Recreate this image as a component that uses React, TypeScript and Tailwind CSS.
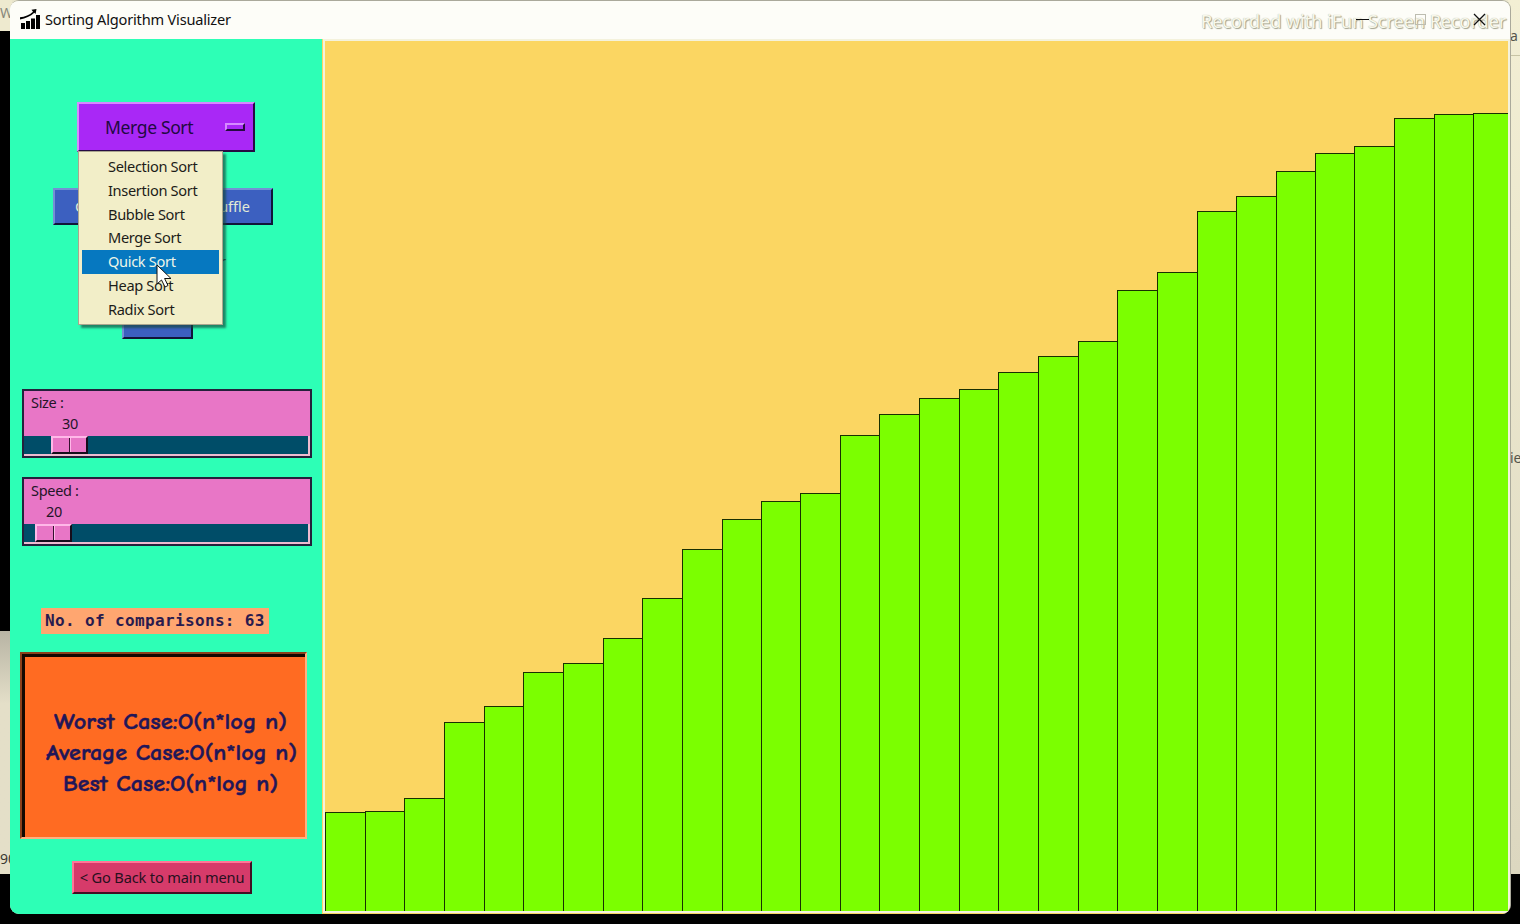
import React from "react";

const bars: [number, number][] = [
  [325, 812], [365, 811], [404, 798], [444, 722], [484, 706], [523, 672], [563, 663], [603, 638], [642, 598], [682, 549],
  [722, 519], [761, 501], [800, 493], [840, 435], [879, 414], [919, 398], [959, 389], [998, 372], [1038, 356], [1078, 341],
  [1117, 290], [1157, 272], [1197, 211], [1236, 196], [1276, 171], [1315, 153], [1354, 146], [1394, 118], [1434, 114], [1473, 113],
];
const END = 1507;
const FLOOR = 911;

const algorithms = ["Selection Sort", "Insertion Sort", "Bubble Sort", "Merge Sort", "Quick Sort", "Heap Sort", "Radix Sort"];

function Title() {
  return (
    <header className="relative flex h-[38px] shrink-0 items-start bg-[#fdfdf8] pl-[10px]">
      <svg className="mt-[8px] h-5 w-5" viewBox="0 0 20 20" fill="black">
        <path d="M0 8.2C5 7.8 9.5 6 13 2.7L11.5 .7L16.5 0L15.6 5L14.3 3.7C10.5 7.3 5.5 9.5 0 10.4Z" />
        <path d="M1 14h4v6H1zM6 12h4v8H6zM11 9.500h4v10.500H11zM16 6h4v14h-4z" />
      </svg>
      <h1 className="ml-[5px] mt-[7px] w-[188px] whitespace-nowrap text-[14.6px] leading-[22px] tracking-[-0.2px] text-[#111]">Sorting Algorithm Visualizer</h1>
      <span className="absolute left-[1191px] top-[8px] whitespace-nowrap text-[18px] leading-6 text-[#f8f8ea] [text-shadow:1px_1px_1px_#a0a08c,0_0_1px_#aaaa98]">Recorded with iFun Screen Recorder</span>
      <svg className="absolute left-[1346px] top-[12px] h-[14px] w-[132px]" viewBox="0 0 132 14" fill="none">
        <path d="M0 6.500h13" stroke="#111" />
        <rect x="59.500" y="1.500" width="10" height="10" stroke="#bdbdb0" />
        <path d="M118 1l11 11M129 1l-11 11" stroke="#111" strokeWidth="1.300" />
      </svg>
    </header>
  );
}

function Slider({ label, value, valuePad, pad }: { label: string; value: number; valuePad: string; pad: string }) {
  return (
    <div className="flex h-[69px] w-[290px] flex-col border-2 border-[#24213c] bg-[#e876c6] text-[14.500px] text-[#241528]">
      <div className="mt-px h-[20px] pl-[7px] leading-[20px] tracking-[-0.3px]">{label}</div>
      <div className={`h-[24px] leading-[22px] tracking-[-0.3px] ${valuePad}`}>{value}</div>
      <div className={`flex h-[20px] border-b-2 border-r-2 border-[#eebbd0] bg-[#004d68] ${pad}`}>
        <div className="flex h-[18px] w-[37px] border-2 border-b-[#160d1a] border-l-[#ffb8e8] border-r-[#160d1a] border-t-[#ffb8e8] bg-[#e876c6]">
          <div className="w-[17px] border-r border-[#34112d]" />
          <div className="grow border-l border-[#ffb8e8]" />
        </div>
      </div>
    </div>
  );
}

function Menu() {
  return (
    <div className="absolute left-[68px] top-[112px] h-[174px] w-[145px] border border-[#aaa58e] bg-[#f2eec8] px-[3px] pt-[3px] shadow-[3px_3px_2px_rgba(20,70,60,0.65)]">
      {algorithms.map((name) => (
        <div key={name} className={name === "Quick Sort" ? "h-[23.800px] bg-[#0678c0] pl-[26px] text-[14.600px] leading-[23px] tracking-[-0.33px] text-[#eef6e8]" : "h-[23.800px] pl-[26px] text-[14.600px] leading-[23px] tracking-[-0.33px] text-[#1c1c18]"}>
          {name}
        </div>
      ))}
      <svg className="absolute left-[77px] top-[112px] h-[26px] w-[18px]" viewBox="0 0 18 26">
        <path d="M1 1v19l4.500-4 3.500 7 3-1.500-3.400-7H15Z" fill="white" stroke="#111" />
      </svg>
    </div>
  );
}

function Sidebar() {
  return (
    <aside className="relative flex w-[312px] shrink-0 flex-col bg-[#2dffb6]">
      <div className="ml-[67px] mt-[63px] flex h-[50px] w-[178px] items-center border-2 border-b-[#260b42] border-l-[#d58bff] border-r-[#260b42] border-t-[#d58bff] bg-[#a928f6] pl-[26px] text-[17.500px] text-[#220a42]">
        <span className="w-[120px] tracking-[-0.35px]">Merge Sort</span>
        <i className="h-[8px] w-[20px] border-2 border-b-[#260b42] border-l-[#d58bff] border-r-[#260b42] border-t-[#d58bff]" />
      </div>
      <div className="ml-[43px] mt-[36px] flex h-[37px] w-[220px] justify-between">
        <div className="w-[106px] border-2 border-b-[#101638] border-l-[#7490d5] border-r-[#101638] border-t-[#7490d5] bg-[#3c60c0] pl-[20px] text-[14.500px] leading-[33px] text-[#e2ead6]">Generate</div>
        <div className="w-[84px] border-2 border-b-[#101638] border-l-[#7490d5] border-r-[#101638] border-t-[#7490d5] bg-[#3c60c0] pr-[21px] text-right text-[14.500px] leading-[33px] text-[#e2ead6]">Shuffle</div>
      </div>
      <div className="ml-[103px] mt-[25px] h-[22px] w-[113px] text-right text-[14.500px] leading-[22px] text-[#173c30]">Order</div>
      <div className="ml-[112px] mt-[31px] h-[36px] w-[71px] border-2 border-b-[#101638] border-l-[#7490d5] border-r-[#101638] border-t-[#7490d5] bg-[#3c60c0]" />
      <div className="ml-[12px] mt-[50px] flex flex-col gap-[19px]">
        <Slider label="Size :" value={30} valuePad="pl-[38px]" pad="pl-[27px]" />
        <Slider label="Speed :" value={20} valuePad="pl-[22px]" pad="pl-[11px]" />
      </div>
      <div className="ml-[31px] mt-[62px] h-[26px] w-[228px] whitespace-pre bg-[#ffa670] pl-[4px] font-['DejaVu_Sans_Mono'] text-[16px] font-bold leading-[26px] tracking-[0.36px] text-[#2a1b4e]">No. of comparisons: 63</div>
      <div className="ml-[10px] mt-[18px] flex h-[187px] w-[287px] border-2 border-b-[#ffb080] border-l-[#8b401b] border-r-[#ffb080] border-t-[#8b401b]">
        <div className="flex grow flex-col items-center border-l-[3px] border-t-[3px] border-[#130800] bg-[#ff6b22] pl-[14px] pt-[49px] font-['Comic_Neue','Comic_Sans_MS','Lato'] text-[21.500px] font-black leading-[31.300px] text-[#211659]">
          <svg className="h-[95px] w-[264px] overflow-visible" viewBox="0 0 264 95" fill="#211659" stroke="#211659" strokeWidth="0.400">
            <text x="14" y="22.500" textLength="233" lengthAdjust="spacingAndGlyphs">Worst Case:O(n*log n)</text>
            <text x="6" y="53.500" textLength="251" lengthAdjust="spacingAndGlyphs">Average Case:O(n*log n)</text>
            <text x="23" y="85" textLength="215" lengthAdjust="spacingAndGlyphs">Best Case:O(n*log n)</text>
          </svg>
        </div>
      </div>
      <div className="ml-[62px] mt-[22px] h-[33px] w-[180px] whitespace-nowrap border-2 border-b-[#401023] border-l-[#ff7698] border-r-[#401023] border-t-[#ff7698] bg-[#d63b6a] text-center text-[14.600px] leading-[29px] tracking-[-0.15px] text-[#28101e]">&lt; Go Back to main menu</div>
      <Menu />
    </aside>
  );
}

function Chart() {
  return (
    <svg className="h-[875px] w-[1188px] shrink-0 bg-[#fbd662]" viewBox="322 39 1188 875" shapeRendering="crispEdges">
      <path d="M324 913V40H1509V912H323" fill="none" stroke="#f4f2dc" strokeWidth="2" />
      {bars.map(([x, y], i) => {
        const last = i + 1 === bars.length;
        const right = last ? END : bars[i + 1][0];
        return (
          <g key={x}>
            <rect x={x} y={y} width={right - x + 1} height={FLOOR - y} fill="#7bff00" />
            <path d={`M${x + 0.5} ${FLOOR}V${y + 0.5}H${right + 0.5}${last ? "" : `V${FLOOR}`}`} fill="none" stroke="#183000" strokeWidth="1.300" />
          </g>
        );
      })}
    </svg>
  );
}

export default function App() {
  return (
    <main className="relative h-[924px] w-[1520px] overflow-hidden bg-black font-['Noto_Sans','Open_Sans',sans-serif]">
      <div className="flex h-[874px] justify-between bg-[#e9e5cc] text-[14px] text-[#55554b]">
        <div className="flex w-3 flex-col overflow-hidden bg-[#eeeacf]">
          <span className="h-[31px] pt-[2px] text-[#88887c]">W</span>
          <div className="h-[600px] shrink-0 bg-black" />
          <div className="grow bg-gradient-to-b from-[#b8b4a4] via-[#e4dfc8] via-30% to-[#e4dfc8] pt-[217px] text-[#393932]">90</div>
        </div>
        <div className="flex w-[12px] flex-col overflow-hidden bg-gradient-to-b from-[#f3efd4] to-[#dcd7c0] pl-[2px]">
          <span className="mt-[25px] h-[31px] border-b border-[#c8c4a5]">a</span>
          <span className="mt-[391px]">ie</span>
        </div>
      </div>
      <section className="absolute left-[10px] top-0 flex h-[914px] w-[1501px] flex-col overflow-hidden rounded-[9px] border-r border-t border-[#aaa99b] bg-[#f4f2dc]">
        <Title />
        <div className="flex h-[875px]">
          <Sidebar />
          <Chart />
        </div>
      </section>
    </main>
  );
}
